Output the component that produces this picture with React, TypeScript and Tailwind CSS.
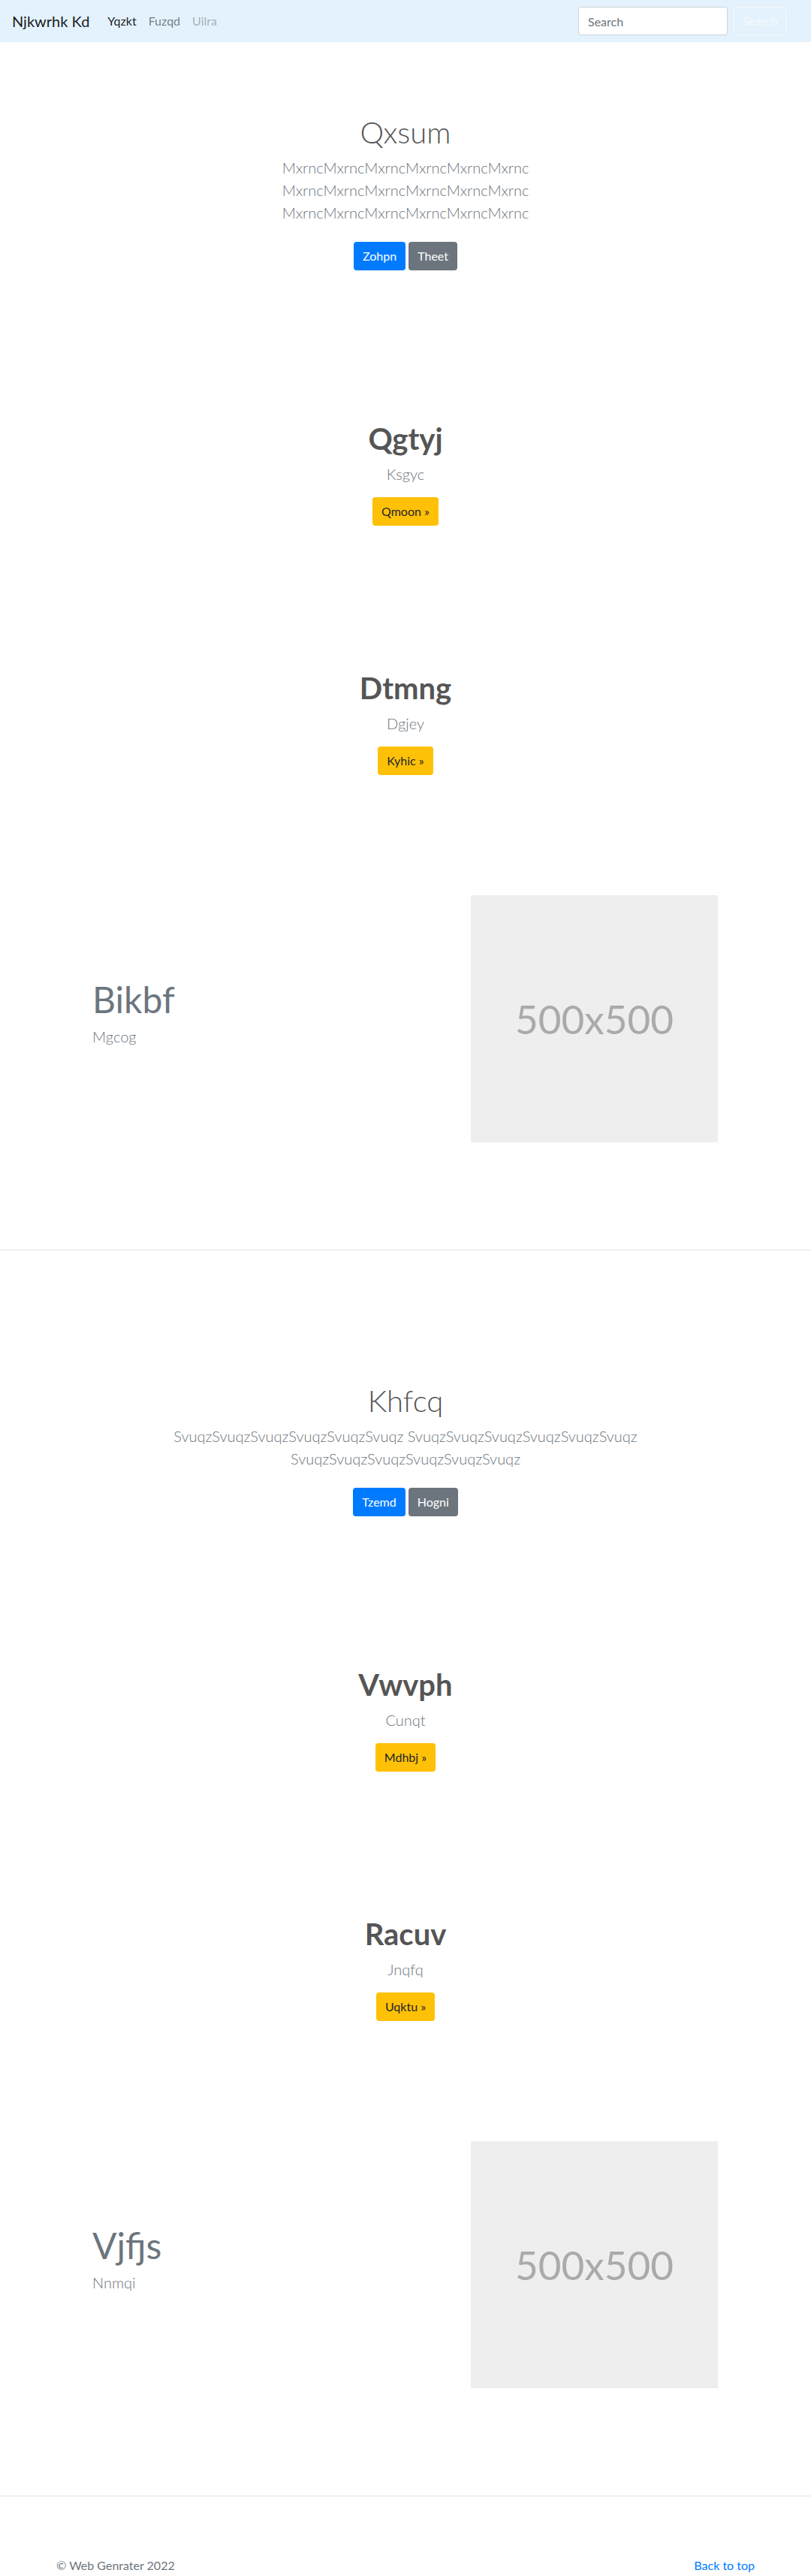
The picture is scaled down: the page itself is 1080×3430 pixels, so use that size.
import React from 'react'

interface HeroProps {
    title: string
    lines: string[]
    primary: string
    secondary: string
}

interface CalloutProps {
    title: string
    sub: string
    action: string
}

interface FeatureProps {
    title: string
    sub: string
}

const font = { fontFamily: 'Lato, "Open Sans", Arial, sans-serif' }

function Navbar() {
    return (
        <nav className="flex h-[56px] items-center bg-[#e3f2fd] pl-4 pr-[33px]">
            <a className="mr-4 text-[20px] leading-[30px] text-black/90">Njkwrhk Kd</a>
            <ul className="flex flex-1 text-[16px] leading-6">
                <li className="px-2 text-black/90">Yqzkt</li>
                <li className="px-2 text-black/50">Fuzqd</li>
                <li className="px-2 text-black/30">Uilra</li>
            </ul>
            <form className="flex items-center">
                <input
                    placeholder="Search"
                    className="mr-2 h-[38px] w-[199px] rounded border border-[#ced4da] bg-white px-3 text-[16px] text-[#495057] placeholder:text-[#6c757d] outline-none"
                />
                <button type="button" className="h-[38px] w-[70px] rounded border border-[#f8f9fa] text-[16px] text-[#f8f9fa]">
                    Search
                </button>
            </form>
        </nav>
    )
}

function Hero({ title, lines, primary, secondary }: HeroProps) {
    return (
        <section className="py-[96px] text-center">
            <h1 className="mb-2 text-[40px] font-light leading-[48px] text-[#555]">{title}</h1>
            <p className="text-[20px] font-light leading-[30px] text-[#6c757d]">
                {lines.map((line, i) => (
                    <span key={i} className="block">{line}</span>
                ))}
            </p>
            <p className="mt-[24px] mb-2 flex justify-center gap-1">
                <a className="rounded bg-[#007bff] px-3 py-[7px] text-[16px] leading-6 text-white">{primary}</a>
                <a className="rounded bg-[#6c757d] px-3 py-[7px] text-[16px] leading-6 text-white">{secondary}</a>
            </p>
        </section>
    )
}

function Callout({ title, sub, action }: CalloutProps) {
    return (
        <section className="py-[96px] text-center">
            <h2 className="mb-2 text-[40px] font-bold leading-[48px] text-[#555]">{title}</h2>
            <p className="mb-4 text-[20px] font-light leading-[30px] text-[#6c757d]">{sub}</p>
            <div className="flex justify-center">
                <a className="rounded bg-[#ffc107] px-3 py-[7px] text-[16px] leading-6 text-[#212529]">{action} »</a>
            </div>
        </section>
    )
}

function Feature({ title, sub }: FeatureProps) {
    return (
        <section className="mx-auto w-[960px] px-[15px] pt-[64px] pb-[63px]">
            <div className="flex items-center">
                <div className="flex-1 pb-[14px] pl-[48px]">
                    <h2 className="mb-[10px] text-[48px] leading-[50px] text-[#6c757d]">{title}</h2>
                    <p className="text-[20px] font-light leading-[28px] text-[#6c757d]">{sub}</p>
                </div>
                <div className="mr-[49px] flex h-[329px] w-[329px] items-center justify-center bg-[#eeeeee]">
                    <span className="text-[53px] text-[#aaaaaa]">500x500</span>
                </div>
            </div>
        </section>
    )
}

export default function App() {
    return (
        <div className="min-h-[3430px] bg-white" style={font}>
            <Navbar />
            <main>
                <Hero
                    title="Qxsum"
                    lines={[
                        'MxrncMxrncMxrncMxrncMxrncMxrnc',
                        'MxrncMxrncMxrncMxrncMxrncMxrnc',
                        'MxrncMxrncMxrncMxrncMxrncMxrnc',
                    ]}
                    primary="Zohpn"
                    secondary="Theet"
                />
                <Callout title="Qgtyj" sub="Ksgyc" action="Qmoon" />
                <Callout title="Dtmng" sub="Dgjey" action="Kyhic" />
                <Feature title="Bikbf" sub="Mgcog" />
                <hr className="my-[80px] border-t border-[#e5e5e5]" />
                <Hero
                    title="Khfcq"
                    lines={[
                        'SvuqzSvuqzSvuqzSvuqzSvuqzSvuqz SvuqzSvuqzSvuqzSvuqzSvuqzSvuqz',
                        'SvuqzSvuqzSvuqzSvuqzSvuqzSvuqz',
                    ]}
                    primary="Tzemd"
                    secondary="Hogni"
                />
                <Callout title="Vwvph" sub="Cunqt" action="Mdhbj" />
                <Callout title="Racuv" sub="Jnqfq" action="Uqktu" />
                <Feature title="Vjfjs" sub="Nnmqi" />
                <hr className="my-[80px] border-t border-[#e5e5e5]" />
            </main>
            <footer className="mx-auto flex w-[960px] justify-between px-[15px] text-[16px] leading-6">
                <p className="text-[#6c757d]">© Web Genrater 2022</p>
                <a className="text-[#007bff]">Back to top</a>
            </footer>
        </div>
    )
}
